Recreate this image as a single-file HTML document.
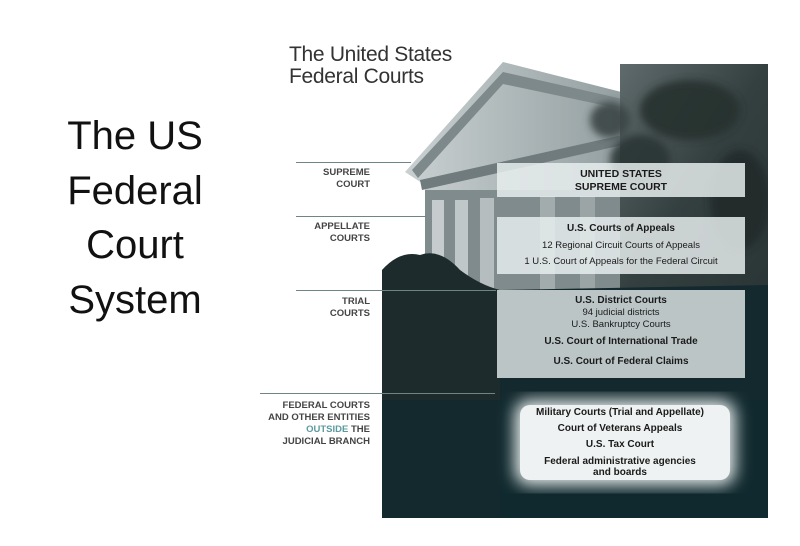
<!DOCTYPE html>
<html><head><meta charset="utf-8"><style>
html,body{margin:0;padding:0;background:#fff;width:800px;height:546px;overflow:hidden;position:relative;font-family:"Liberation Sans",sans-serif}
.t{position:absolute;left:35px;width:200px;text-align:center;font-size:40px;color:#111;line-height:54.5px;top:109px}
.hd{position:absolute;left:289px;top:44px;font-size:21px;line-height:22px;color:#333;letter-spacing:-0.3px}
.lab{position:absolute;width:110px;left:260px;text-align:right;font-size:9.5px;font-weight:bold;color:#444;line-height:12px}
.ln{position:absolute;height:1px;background:#6f8486}
.box{position:absolute;left:497px;width:248px;background:rgba(232,238,238,0.84);text-align:center;color:#1a1a1a;font-size:9.5px}
.b{font-weight:bold;font-size:10px}
</style></head><body>
<div class="t">The US<br>Federal<br>Court<br>System</div>
<div class="hd">The United States<br>Federal Courts</div>
<svg style="position:absolute;left:0;top:0" width="800" height="546">
<defs>
<linearGradient id="bg" x1="0" y1="0" x2="0" y2="1"><stop offset="0" stop-color="#3a4647"/><stop offset="0.45" stop-color="#223133"/><stop offset="1" stop-color="#0e2529"/></linearGradient>
<linearGradient id="bd" x1="0" y1="0" x2="1" y2="0"><stop offset="0" stop-color="#c9d0d1"/><stop offset="1" stop-color="#8e9a9c"/></linearGradient>
<linearGradient id="tr" x1="0" y1="0" x2="1" y2="1"><stop offset="0" stop-color="#5f6b6c"/><stop offset="0.5" stop-color="#343f40"/><stop offset="1" stop-color="#2a3536"/></linearGradient>
<filter id="bl"><feGaussianBlur stdDeviation="8"/></filter>
<filter id="bl3"><feGaussianBlur stdDeviation="4"/></filter>
<clipPath id="cp"><rect x="382" y="62" width="386" height="456"/></clipPath>
</defs>
<g clip-path="url(#cp)">
<path d="M382 270 L382 518 L768 518 L768 64 L620 64 L640 290 L500 300 L440 255 Z" fill="url(#bg)"/>
<path d="M405 172 L503 62 L645 98 L645 300 L425 300 L425 185 Z" fill="url(#bd)"/>
<path d="M412 170 L503 72 L645 104 L645 114 L503 84 L418 178 Z" fill="#7d898b"/>
<path d="M420 180 L645 130 L645 140 L422 190 Z" fill="#6f7b7d"/>
<rect x="425" y="190" width="220" height="110" fill="#7f8b8d"/>
<rect x="432" y="200" width="12" height="100" fill="#c6cccd"/>
<rect x="455" y="200" width="13" height="100" fill="#c0c7c8"/>
<rect x="480" y="198" width="14" height="102" fill="#b5bdbe"/>
<rect x="540" y="196" width="15" height="100" fill="#a3acad"/>
<rect x="580" y="196" width="15" height="100" fill="#9ba5a6"/>
<rect x="620" y="64" width="148" height="236" fill="url(#tr)"/>
<g filter="url(#bl3)" opacity="0.9">
<ellipse cx="690" cy="110" rx="50" ry="30" fill="#26302f"/>
<ellipse cx="640" cy="160" rx="30" ry="25" fill="#2c3636"/>
<ellipse cx="740" cy="200" rx="30" ry="50" fill="#222c2c"/>
<ellipse cx="610" cy="120" rx="20" ry="18" fill="#3a4445"/>
</g>
<path d="M382 270 Q400 250 420 255 Q440 248 460 270 Q480 285 500 290 L500 518 L382 518 Z" fill="#1d2b2d"/>
<path d="M500 290 L768 285 L768 518 L500 518 Z" fill="#13292d"/>
<path d="M382 400 L768 400 L768 518 L382 518 Z" fill="#0f2a2f" opacity="0.7"/>
</g>
<rect x="515" y="400" width="220" height="85" rx="14" fill="#e8eeee" filter="url(#bl)"/>
<rect x="520" y="405" width="210" height="75" rx="10" fill="#eef2f2"/>
</svg>
<div class="ln" style="left:296px;top:162px;width:115px"></div>
<div class="ln" style="left:296px;top:216px;width:130px"></div>
<div class="ln" style="left:296px;top:290px;width:200px"></div>
<div class="ln" style="left:260px;top:393px;width:235px"></div>
<div class="lab" style="top:167px">SUPREME<br>COURT</div>
<div class="lab" style="top:221px">APPELLATE<br>COURTS</div>
<div class="lab" style="top:296px">TRIAL<br>COURTS</div>
<div class="lab" style="top:400px;width:110px;left:260px">FEDERAL COURTS<br>AND OTHER ENTITIES<br><span style="color:#5a9a9e">OUTSIDE</span> THE<br>JUDICIAL BRANCH</div>
<div class="box" style="top:163px;height:34px"><div class="b" style="padding-top:5px;line-height:13px;font-size:10.5px">UNITED STATES<br>SUPREME COURT</div></div>
<div class="box" style="top:217px;height:57px"><div class="b" style="padding-top:6px;line-height:12px">U.S. Courts of Appeals</div><div style="line-height:16px;padding-top:3px">12 Regional Circuit Courts of Appeals<br>1 U.S. Court of Appeals for the Federal Circuit</div></div>
<div class="box" style="top:290px;height:88px;background:rgba(225,232,232,0.82)"><div class="b" style="padding-top:5px;line-height:12px">U.S. District Courts</div><div style="line-height:12px">94 judicial districts<br>U.S. Bankruptcy Courts</div><div class="b" style="line-height:20px;padding-top:1px">U.S. Court of International Trade<br>U.S. Court of Federal Claims</div></div>
<div class="box" style="top:405px;left:505px;width:230px;background:none"><div class="b" style="line-height:16px">Military Courts (Trial and Appellate)<br>Court of Veterans Appeals<br>U.S. Tax Court</div><div class="b" style="line-height:11px;padding-top:3px">Federal administrative agencies<br>and boards</div></div>
</body></html>
